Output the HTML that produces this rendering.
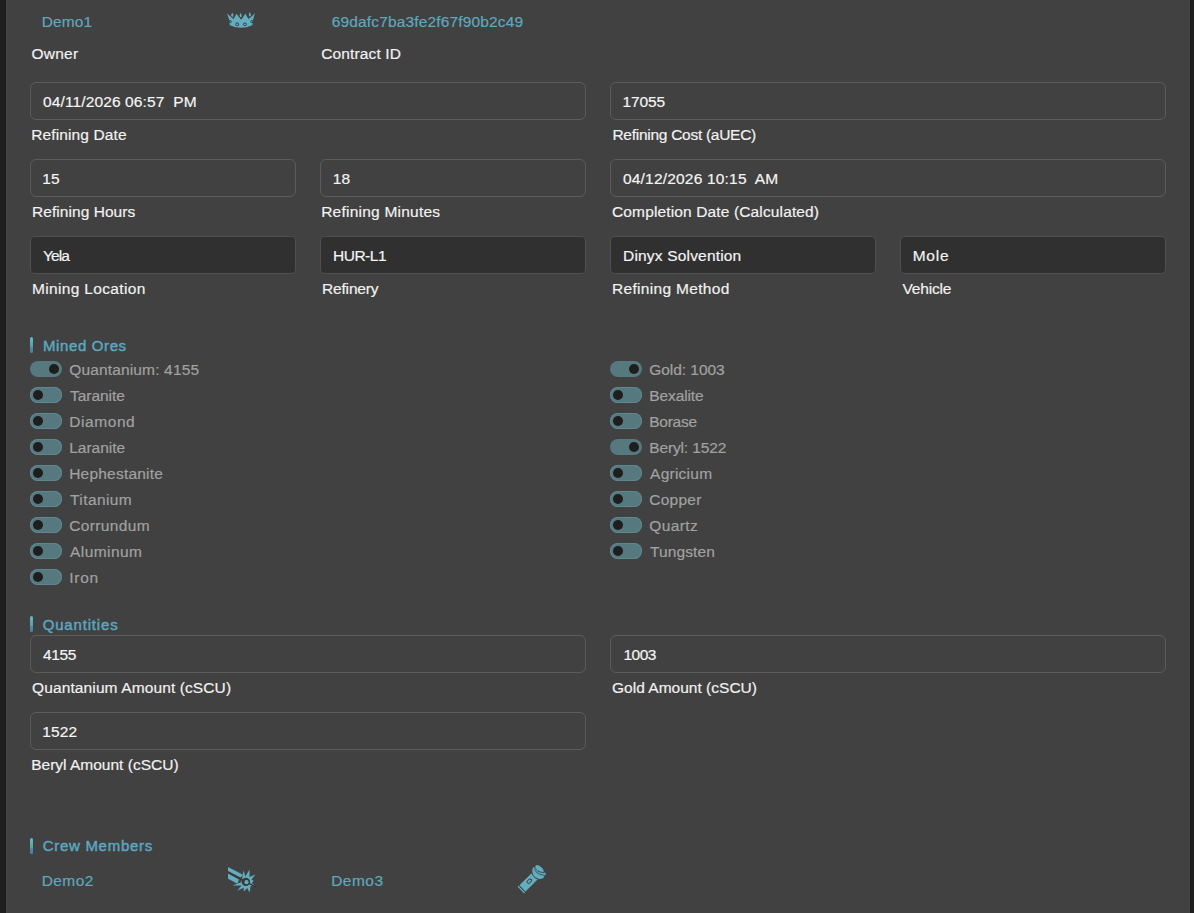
<!DOCTYPE html>
<html><head><meta charset="utf-8">
<style>
html,body{margin:0;padding:0;}
body{width:1194px;height:913px;overflow:hidden;background:#414141;position:relative;font-family:"Liberation Sans",sans-serif;font-size:15.5px;color:#f0f0f0;-webkit-text-stroke:0.18px currentColor;}
.strip{position:absolute;left:0;top:0;width:6px;height:913px;background:#1f1f1f;box-shadow:inset -1px 0 0 #1b1b1b,1px 0 0 #454545;}
.strip.r{left:1190px;width:4px;box-shadow:inset 1px 0 0 #1b1b1b,-1px 0 0 #454545;}
.t{position:absolute;white-space:pre;line-height:20px;}
.lnk{color:#5fa9be;}
.lbl{color:#f2f2f2;}
.in{position:absolute;box-sizing:border-box;height:38px;border:1px solid #5c5c5c;border-radius:6px;background:#414141;}
.in.dk{background:#303030;border-color:#4f4f4f;border-radius:4px;}
.in span{position:absolute;left:12px;top:9px;line-height:20px;color:#f5f5f5;white-space:pre;}
.hdr{position:absolute;left:30px;height:16px;}
.hdr i{position:absolute;left:0;top:0;width:3px;height:16px;border-radius:2px;background:linear-gradient(#62b6c8 0%,#62b2c2 22%,#5fa9a2 38%,#5da79e 58%,#4b86b4 68%,#4a80b0 100%);}
.hdr b{position:absolute;left:13px;top:-1px;line-height:20px;font-size:15px;font-weight:normal;-webkit-text-stroke:0.45px #5ba8c0;color:#5ba8c0;white-space:pre;}
.tg{position:absolute;width:32px;height:16px;border-radius:8px;background:#56787f;}
.tg.off{box-shadow:inset 0 0 0 1px #5e8890;}
.tg i{position:absolute;top:3px;width:10px;height:10px;border-radius:50%;background:#1e1e1e;}
.tg.on i{left:19px;}
.tg.off i{left:3px;}
.ol{position:absolute;white-space:pre;line-height:20px;color:#a2a2a2;}
</style></head><body>
<div class="strip"></div>
<div class="strip r"></div>
<div class="t lnk" style="left:41.64px;top:12px;letter-spacing:0.113px;">Demo1</div>
<div class="t lnk" style="left:331.73px;top:12px;letter-spacing:0.149px;">69dafc7ba3fe2f67f90b2c49</div>
<div class="t lbl" style="left:31.46px;top:44px;letter-spacing:0.248px;">Owner</div>
<div class="t lbl" style="left:321.19px;top:44px;letter-spacing:0.135px;">Contract ID</div>
<div class="in" style="left:30px;top:82px;width:556px;"><span style="left:12.00px;letter-spacing:0.123px;">04/11/2026 06:57  PM</span></div>
<div class="in" style="left:610px;top:82px;width:556px;"><span style="left:11.46px;letter-spacing:-0.113px;">17055</span></div>
<div class="t lbl" style="left:31.19px;top:125px;letter-spacing:0.127px;">Refining Date</div>
<div class="t lbl" style="left:612.45px;top:125px;letter-spacing:-0.275px;">Refining Cost (aUEC)</div>
<div class="in" style="left:30px;top:159px;width:266px;"><span style="left:11.37px;letter-spacing:-0.090px;">15</span></div>
<div class="in" style="left:320px;top:159px;width:266px;"><span style="left:11.73px;letter-spacing:0.270px;">18</span></div>
<div class="in" style="left:610px;top:159px;width:556px;"><span style="left:12.00px;letter-spacing:0.189px;">04/12/2026 10:15  AM</span></div>
<div class="t lbl" style="left:32.00px;top:202px;letter-spacing:0.055px;">Refining Hours</div>
<div class="t lbl" style="left:321.19px;top:202px;letter-spacing:0.228px;">Refining Minutes</div>
<div class="t lbl" style="left:612.00px;top:202px;letter-spacing:0.137px;">Completion Date (Calculated)</div>
<div class="in dk" style="left:30px;top:236px;width:266px;"><span style="left:12.00px;letter-spacing:-0.930px;">Yela</span></div>
<div class="in dk" style="left:320px;top:236px;width:266px;"><span style="left:12.00px;letter-spacing:-0.486px;">HUR-L1</span></div>
<div class="in dk" style="left:610px;top:236px;width:266px;"><span style="left:12.00px;letter-spacing:0.186px;">Dinyx Solvention</span></div>
<div class="in dk" style="left:900px;top:236px;width:266px;"><span style="left:11.64px;letter-spacing:0.780px;">Mole</span></div>
<div class="t lbl" style="left:32.00px;top:279px;letter-spacing:0.341px;">Mining Location</div>
<div class="t lbl" style="left:322.00px;top:279px;letter-spacing:-0.167px;">Refinery</div>
<div class="t lbl" style="left:612.00px;top:279px;letter-spacing:0.315px;">Refining Method</div>
<div class="t lbl" style="left:902.54px;top:279px;letter-spacing:-0.195px;">Vehicle</div>
<div class="hdr" style="top:337px;"><i></i><b style="left:13.00px;letter-spacing:0.620px;">Mined Ores</b></div>
<div class="tg on" style="left:30px;top:361px;"><i></i></div><div class="ol" style="left:69.19px;top:360px;letter-spacing:0.156px;">Quantanium: 4155</div>
<div class="tg off" style="left:30px;top:387px;"><i></i></div><div class="ol" style="left:70.09px;top:386px;letter-spacing:-0.064px;">Taranite</div>
<div class="tg off" style="left:30px;top:413px;"><i></i></div><div class="ol" style="left:69.19px;top:412px;letter-spacing:0.585px;">Diamond</div>
<div class="tg off" style="left:30px;top:439px;"><i></i></div><div class="ol" style="left:69.19px;top:438px;letter-spacing:-0.013px;">Laranite</div>
<div class="tg off" style="left:30px;top:465px;"><i></i></div><div class="ol" style="left:69.19px;top:464px;letter-spacing:0.213px;">Hephestanite</div>
<div class="tg off" style="left:30px;top:491px;"><i></i></div><div class="ol" style="left:70.09px;top:490px;letter-spacing:0.386px;">Titanium</div>
<div class="tg off" style="left:30px;top:517px;"><i></i></div><div class="ol" style="left:69.19px;top:516px;letter-spacing:0.382px;">Corrundum</div>
<div class="tg off" style="left:30px;top:543px;"><i></i></div><div class="ol" style="left:70.09px;top:542px;letter-spacing:0.424px;">Aluminum</div>
<div class="tg off" style="left:30px;top:569px;"><i></i></div><div class="ol" style="left:69.19px;top:568px;letter-spacing:0.750px;">Iron</div>
<div class="tg on" style="left:610px;top:361px;"><i></i></div><div class="ol" style="left:649.19px;top:360px;letter-spacing:-0.040px;">Gold: 1003</div>
<div class="tg off" style="left:610px;top:387px;"><i></i></div><div class="ol" style="left:649.19px;top:386px;letter-spacing:-0.090px;">Bexalite</div>
<div class="tg off" style="left:610px;top:413px;"><i></i></div><div class="ol" style="left:649.19px;top:412px;letter-spacing:-0.234px;">Borase</div>
<div class="tg on" style="left:610px;top:439px;"><i></i></div><div class="ol" style="left:649.19px;top:438px;letter-spacing:-0.135px;">Beryl: 1522</div>
<div class="tg off" style="left:610px;top:465px;"><i></i></div><div class="ol" style="left:650.09px;top:464px;letter-spacing:0.244px;">Agricium</div>
<div class="tg off" style="left:610px;top:491px;"><i></i></div><div class="ol" style="left:649.19px;top:490px;letter-spacing:0.270px;">Copper</div>
<div class="tg off" style="left:610px;top:517px;"><i></i></div><div class="ol" style="left:649.19px;top:516px;letter-spacing:0.396px;">Quartz</div>
<div class="tg off" style="left:610px;top:543px;"><i></i></div><div class="ol" style="left:650.09px;top:542px;letter-spacing:0.090px;">Tungsten</div>
<div class="hdr" style="top:616px;"><i></i><b style="left:12.64px;letter-spacing:0.840px;">Quantities</b></div>
<div class="in" style="left:30px;top:635px;width:556px;"><span style="left:12.09px;letter-spacing:-0.420px;">4155</span></div>
<div class="in" style="left:610px;top:635px;width:556px;"><span style="left:12.45px;letter-spacing:-0.510px;">1003</span></div>
<div class="t lbl" style="left:32.09px;top:678px;letter-spacing:0.113px;">Quantanium Amount (cSCU)</div>
<div class="t lbl" style="left:612.00px;top:678px;letter-spacing:0.016px;">Gold Amount (cSCU)</div>
<div class="in" style="left:30px;top:712px;width:556px;"><span style="left:11.19px;letter-spacing:0.180px;">1522</span></div>
<div class="t lbl" style="left:31.19px;top:755px;letter-spacing:0.005px;">Beryl Amount (cSCU)</div>
<div class="hdr" style="top:838px;"><i></i><b style="left:12.64px;top:-2px;letter-spacing:0.720px;">Crew Members</b></div>
<div class="t lnk" style="left:41.64px;top:871px;letter-spacing:0.427px;">Demo2</div>
<div class="t lnk" style="left:331.19px;top:871px;letter-spacing:0.472px;">Demo3</div>
<svg style="position:absolute;left:227px;top:12px;" width="28" height="16" viewBox="0 0 28 16">
 <g fill="#62adbf">
  <path d="M0,1 L6.4,6.6 L9.4,1.2 L14.2,7.2 L18.4,1 L21.6,6.6 L28,1 L25.6,9.2 Q26.2,11 25.2,13.2 Q14,18.4 3,13.2 Q2,11 2.6,9.2 Z"/>
  <path d="M5.2,0.6 Q7,3.2 6.1,4.6 Q5.2,5.3 4.4,4.6 Q3.6,3.2 5.2,0.6 Z"/>
  <path d="M13.6,0.8 Q15.4,3.4 14.5,4.8 Q13.6,5.5 12.8,4.8 Q12,3.4 13.6,0.8 Z"/>
  <path d="M22.8,0 Q24.6,2.6 23.7,4 Q22.8,4.7 22,4 Q21.2,2.6 22.8,0 Z"/>
 </g>
 <g fill="none" stroke="#3a3636" stroke-width="0.9">
  <path d="M0.4,1.3 L6.4,6.6 L9.4,1.2 L14.2,7.2 L18.4,1 L21.6,6.6 L27.6,1.3" stroke-width="0.7"/>
  <circle cx="10.2" cy="12.3" r="1.5"/>
  <ellipse cx="17.9" cy="12.3" rx="1.6" ry="1.3"/>
  <circle cx="3.2" cy="9.6" r="1.1"/>
  <circle cx="24.8" cy="9.6" r="1.1"/>
 </g>
</svg>
<svg style="position:absolute;left:228px;top:867px;" width="28" height="26" viewBox="0 0 28 26">
 <g fill="#62adbf">
  <polygon points="0,0 15,7.8 12.5,10.6 0,4.0"/>
  <polygon points="0,6.6 11,12.4 9.4,16.8 0,11.8"/>
  <polygon points="15.5,3.3 17.3,9.6 21.6,2.4 21.4,10.1 27.5,7.5 23.4,12.6 25.6,13.8 23.9,16 27.5,19.5 22.6,18.9 21.6,25.6 19.2,20.9 15.9,24.6 15.6,20.7 9.3,23.7 13.6,18.4 4.5,18.4 13.2,15.2 14.2,11.4"/>
 </g>
 <line x1="0" y1="5.3" x2="28" y2="20.1" stroke="#3a3636" stroke-width="1.3"/>
 <circle cx="17.9" cy="14.9" r="4.2" fill="#3a3636"/>
 <circle cx="18.5" cy="15.2" r="2.1" fill="#62adbf"/>
</svg>
<svg style="position:absolute;left:505px;top:860px;" width="50" height="40" viewBox="0 0 50 40">
 <g fill="#62adbf">
  <polygon points="26.8,12.9 32.8,19.2 20.35,31.65 14.35,25.35"/>
  <line x1="13.5" y1="26.5" x2="19.2" y2="32.5" stroke="#62adbf" stroke-width="1.5" stroke-linecap="round"/>
  <ellipse cx="34.4" cy="8.8" rx="4.9" ry="2.5" transform="rotate(40 34.4 8.8)"/>
  <path d="M28.1,7.3 L30.4,7.6 L38.3,11.6 L41.2,14.1 Q41,15.3 39.4,15.9 L38.6,17.8 Q36.9,19.3 33.2,19 Q29.2,17.8 27.4,13.4 Q26.8,10.2 28.1,7.3 Z"/>
 </g>
 <g fill="none" stroke="#3a3636" stroke-linecap="round">
  <path d="M29.3,6.6 C30.6,10.4 34,12.3 38.6,12.6" stroke-width="0.8"/>
  <path d="M29.8,9.9 C31,12.8 34.5,15 40.5,15.3" stroke-width="0.8"/>
  <path d="M27,12.9 C27.4,15.6 29.5,18 32.8,18.9" stroke-width="0.9"/>
  <line x1="14.0" y1="25.6" x2="20.1" y2="31.9" stroke-width="0.7"/>
  <ellipse cx="24.3" cy="21.2" rx="2.6" ry="1.7" transform="rotate(-45 24.3 21.2)" stroke-width="0.9"/>
 </g>
</svg>
</body></html>
